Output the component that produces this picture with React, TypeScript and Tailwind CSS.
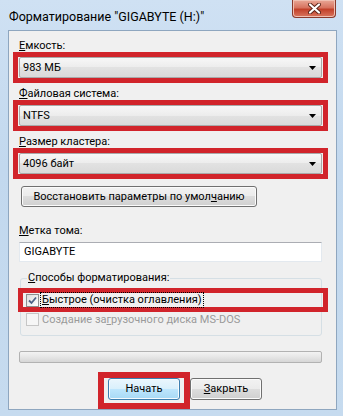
import React from "react";

function Arrow() {
  return (
    <svg width="7" height="4" viewBox="0 0 7 4" className="shrink-0">
      <path d="M0 0h7L3.5 4z" fill="#000" />
    </svg>
  );
}

function Combo({ value }: { value: string }) {
  return (
    <div className="mx-[1px] flex h-[21px] items-center justify-between rounded-[2px] border border-[#a9a9a9] bg-[linear-gradient(#f7f7f7,#ececec_50%,#e2e2e2_50%,#dadada)] pl-[3px] pr-[5px]">
      <span>{value}</span>
      <Arrow />
    </div>
  );
}

function RedBox({ children, className }: { children: React.ReactNode; className: string }) {
  return <div className={"border-[#d1242b] " + className}>{children}</div>;
}

function Button({ children, className }: { children: React.ReactNode; className: string }) {
  return (
    <div
      className={
        "flex items-center justify-center whitespace-nowrap rounded-[3px] border border-[#707070] bg-[linear-gradient(#f2f2f2,#ebebeb_50%,#dddddd_50%,#cfcfcf)] shadow-[inset_0_0_0_1px_#fbfbfb] " +
        className
      }
    >
      {children}
    </div>
  );
}

export default function App() {
  return (
    <div className="flex h-[416px] w-[343px] flex-col bg-[linear-gradient(#cfe1f3,#c2d8ee_40%,#c6dbef)] font-['Roboto',sans-serif] text-[11px] leading-[12px] text-black">
      <div className="relative flex h-[30px] shrink-0 items-center pl-[9px] pt-[3px]">
        <span className="text-[12.5px] leading-[15px]">Форматирование "GIGABYTE (H:)"</span>
        <div className="absolute right-[7px] top-0 flex h-[18px] w-[44px] items-center justify-center rounded-b-[4px] border border-t-0 border-[#8a3a2c] bg-[linear-gradient(#e9a897,#d7735f_45%,#c2412a_55%,#d9765e)] shadow-[inset_0_0_0_1px_#f0c0b2]">
          <svg width="13" height="11" viewBox="0 0 13 11">
            <path d="M2 1.5l9 8M11 1.5l-9 8" stroke="#5a2418" strokeWidth="4" strokeLinecap="round" />
            <path d="M2 1.5l9 8M11 1.5l-9 8" stroke="#ffffff" strokeWidth="2.2" strokeLinecap="round" />
          </svg>
        </div>
      </div>

      <div className="ml-[8px] mr-[6px] h-[380px] shrink-0 overflow-hidden border border-[#8ea6bf] bg-[#f0f0f0] pl-[10px] pr-[14px] pt-[9px]">
        <div className="h-[12px]">
          <u>Е</u>мкость:
        </div>
        <RedBox className="-mx-[6px] border-[5px]">
          <Combo value="983 МБ" />
        </RedBox>

        <div className="mt-[5px] h-[12px]">
          <u>Ф</u>айловая система:
        </div>
        <RedBox className="-mx-[6px] border-[5px]">
          <Combo value="NTFS" />
        </RedBox>

        <div className="mt-[5px] h-[12px]">
          <u>Р</u>азмер кластера:
        </div>
        <RedBox className="-mx-[6px] border-[5px]">
          <Combo value="4096 байт" />
        </RedBox>

        <Button className="ml-[2px] mt-[7px] h-[21px] w-[236px]">
          <span>
            Восстановить параметры по умол<u>ч</u>анию
          </span>
        </Button>

        <div className="mt-[18px] h-[12px]">
          <u>М</u>етка тома:
        </div>
        <div className="mt-[5px] flex h-[20px] items-center border border-[#e3e9ef] border-t-[#abadb3] bg-white pl-[4px]">
          GIGABYTE
        </div>

        <fieldset className="ml-[1px] mt-[10px] h-[64px] rounded-[3px] border border-[#d5dfe5] pl-[6px] pr-[6px]">
          <legend className="h-[12px] px-[1px]">
            <u>С</u>пособы форматирования:
          </legend>
          <RedBox className="-ml-[9px] -mr-[13px] mt-[4px] flex h-[24px] items-center border-[5px] pl-[3px]">
            <div className="flex h-[13px] w-[13px] items-center justify-center border border-[#8e8f8f] bg-[linear-gradient(135deg,#dcdcdc,#ffffff)]">
              <svg width="9" height="9" viewBox="0 0 9 9">
                <path d="M1 4.5l2.5 2.5L8 1.5" stroke="#4d6185" strokeWidth="1.8" fill="none" />
              </svg>
            </div>
            <span className="ml-[2px] px-[1px] leading-[14px] outline-1 outline-dotted outline-[#000]">
              <u>Б</u>ыстрое (очистка оглавления)
            </span>
          </RedBox>
          <div className="-ml-[1px] mt-[1px] flex h-[13px] items-center text-[#9a9a9a]">
            <div className="h-[13px] w-[13px] border border-[#c6c6c6] bg-[#f6f6f6]" />
            <span className="ml-[3px]">
              Создание за<u>г</u>рузочного диска MS-DOS
            </span>
          </div>
        </fieldset>

        <div className="mt-[15px] h-[12px] rounded-[2px] border border-[#b2b2b2] bg-[linear-gradient(#f3f3f3,#e6e6e6_50%,#d6d6d6)]" />

        <div className="mt-[9px] flex items-start">
          <RedBox className="ml-[79px] border-[6px] px-[4px] pb-[3px]">
            <div className="flex h-[22px] w-[72px] items-center justify-center rounded-[3px] border border-[#3c7fb1] bg-[linear-gradient(#eaf6fd,#d9f0fc_50%,#bee6fd_50%,#a7d9f5)] shadow-[inset_0_0_0_1px_#f6fbfe]">
              Начать
            </div>
          </RedBox>
          <Button className="mt-[6px] h-[22px] w-[72px]">
            <span>
              <u>З</u>акрыть
            </span>
          </Button>
        </div>
      </div>
    </div>
  );
}
